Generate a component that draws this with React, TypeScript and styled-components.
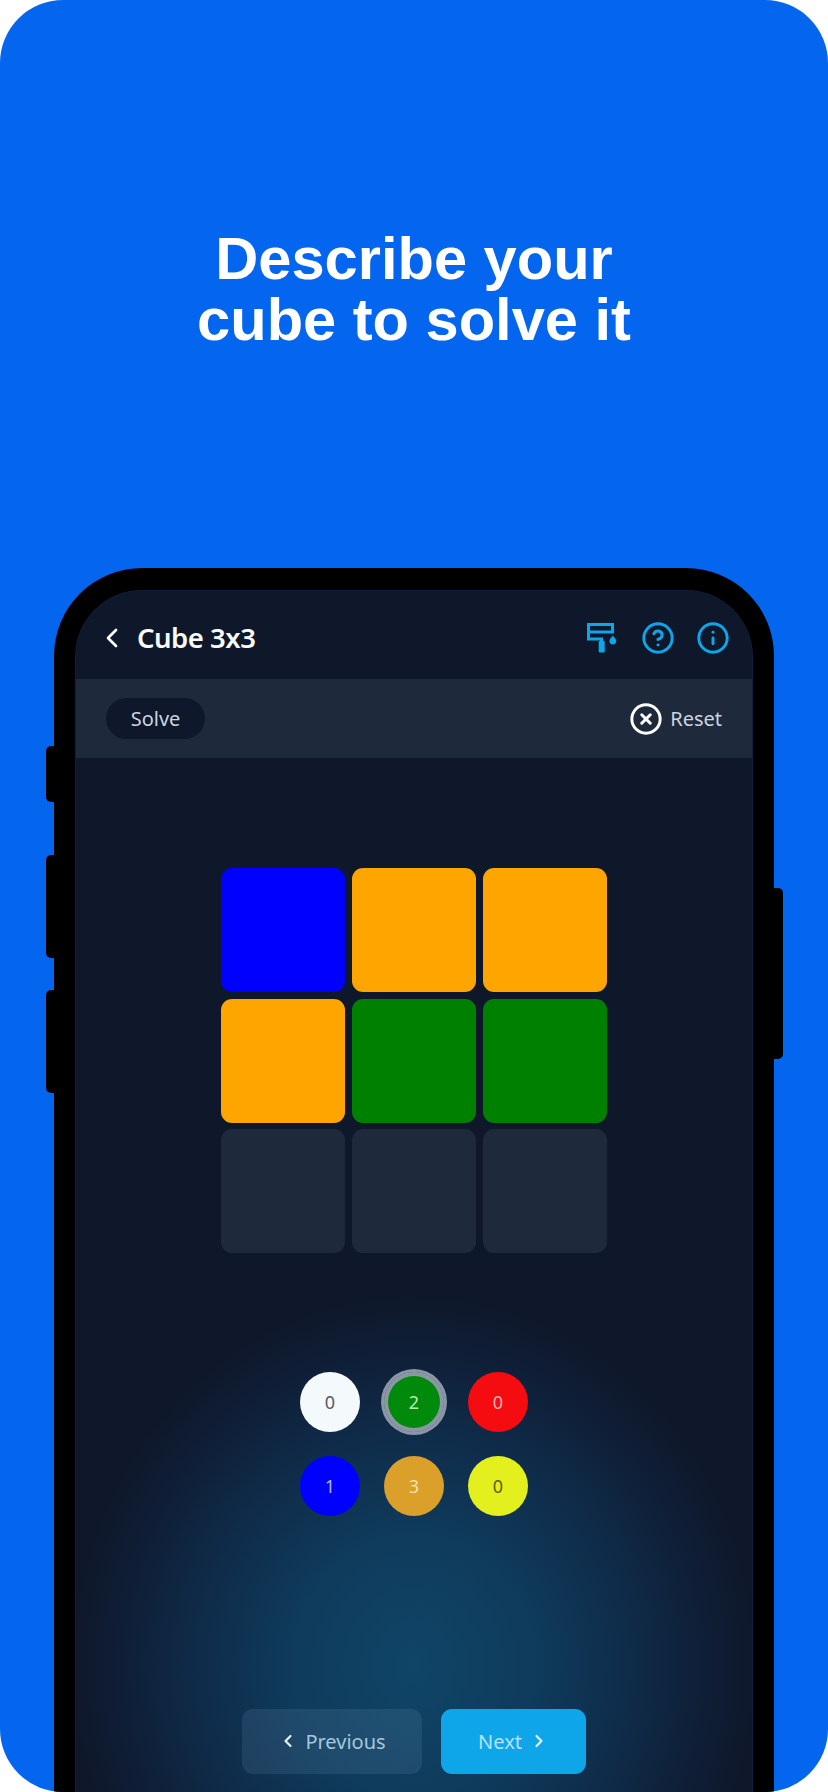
import React from "react";
import styled, { createGlobalStyle } from "styled-components";
import { ChevronLeft, ChevronRight, CircleHelp, Info, CircleX } from "lucide-react";

const Global = createGlobalStyle`
  html, body { margin: 0; padding: 0; background: #fff; }
`;

const Page = styled.div`
  width: 828px;
  height: 1792px;
  overflow: hidden;
  background: #0466ee;
  border-radius: 63px;
  padding-top: 228px;
  box-sizing: border-box;
`;

const Headline = styled.h1`
  margin: 0;
  font-family: "Liberation Sans", Arial, sans-serif;
  font-weight: 700;
  font-size: 59.6px;
  line-height: 61px;
  text-align: center;
  color: #fff;
`;

const Phone = styled.div`
  position: relative;
  width: 720px;
  height: 1400px;
  margin: 218px 0 0 54px;
  box-sizing: border-box;
  border: 21px solid #000;
  border-top-width: 22px;
  border-radius: 88px;
  background: #000;
`;

const SideKey = styled.span<{ $side: "left" | "right"; $top: number; $h: number }>`
  position: absolute;
  ${(p) => (p.$side === "left" ? "left: -29px;" : "right: -30px;")}
  top: ${(p) => p.$top - 590}px;
  height: ${(p) => p.$h}px;
  width: 12px;
  background: #000;
  border-radius: ${(p) => (p.$side === "left" ? "5px 0 0 5px" : "0 5px 5px 0")};
`;

const Screen = styled.div`
  display: flex;
  flex-direction: column;
  height: 100%;
  box-sizing: border-box;
  overflow: hidden;
  border: 1px solid #111f3c;
  border-bottom: none;
  border-radius: 67px 67px 0 0;
  background: radial-gradient(ellipse 345px 375px at 338px 1075px, #0f4567 0%, #0f3b5c 35%, #0f2c4a 62%, #0f1e36 85%, #0f172a 100%), #0f172a;
  font-family: "Noto Sans", sans-serif;
`;

const Header = styled.header`
  flex: none;
  height: 88px;
  display: flex;
  align-items: center;
  padding: 5px 22.5px 0 20px;
  box-sizing: border-box;
  background: #0f172a;
  color: #fff;
`;

const Title = styled.div`
  margin-left: 9px;
  font-size: 27.5px;
  font-weight: 600;
  letter-spacing: -0.5px;
  color: #f8fafc;
  flex: 1;
`;

const HeaderIcons = styled.div`
  display: flex;
  align-items: center;
  gap: 21px;
  color: #0ea5e9;
`;

const Toolbar = styled.div`
  flex: none;
  height: 79px;
  display: flex;
  align-items: center;
  justify-content: space-between;
  padding: 0 30px;
  box-sizing: border-box;
  background: #1e293b;
`;

const SolveButton = styled.button`
  width: 99px;
  height: 41px;
  border: none;
  border-radius: 21px;
  background: #0f172a;
  color: #cbd5e1;
  font: 400 20px "Noto Sans", sans-serif;
  padding: 0;
`;

const ResetButton = styled.div`
  display: flex;
  align-items: center;
  gap: 7.5px;
  color: #cbd5e1;
  font-size: 20px;
  & svg { color: #fff; }
`;

const Board = styled.div`
  align-self: center;
  margin-top: 110px;
  display: grid;
  grid-template-columns: repeat(3, 124px);
  grid-auto-rows: 124px;
  gap: 6.6px 7px;
`;

const Cell = styled.div<{ $c: string }>`
  background: ${(p) => p.$c};
  border-radius: 11px;
`;

const Palette = styled.div`
  align-self: center;
  margin-top: 118.5px;
  display: grid;
  grid-template-columns: repeat(3, 60px);
  grid-auto-rows: 60px;
  gap: 24px;
`;

const Swatch = styled.div<{ $bg: string; $fg: string; $selected?: boolean }>`
  display: flex;
  align-items: center;
  justify-content: center;
  border-radius: 50%;
  background: ${(p) => p.$bg};
  color: ${(p) => p.$fg};
  font-size: 18px;
  ${(p) => (p.$selected ? "box-shadow: 0 0 0 3px #8d96a8, inset 0 0 0 4px #8d96a8;" : "")}
`;

const Nav = styled.div`
  align-self: center;
  margin-top: 193px;
  display: flex;
  gap: 19px;
`;

const NavButton = styled.button<{ $primary?: boolean }>`
  height: 65px;
  width: ${(p) => (p.$primary ? "145px" : "180px")};
  display: flex;
  align-items: center;
  justify-content: center;
  gap: 7px;
  border: none;
  border-radius: 11px;
  padding: 0;
  background: ${(p) => (p.$primary ? "#0ea5e9" : "rgba(148, 190, 220, 0.12)")};
  color: ${(p) => (p.$primary ? "#b6e3f8" : "#a3c8dd")};
  font: 400 20px "Noto Sans", sans-serif;
  & svg { color: #e2f2fb; }
`;

const RollerSvg = styled.svg`
  margin-right: 2.5px;
`;

const RollerIcon = () => (
  <RollerSvg width="30" height="30" viewBox="0 0 30 30" fill="none">
    <rect x="1.5" y="1.5" width="24" height="7.5" stroke="currentColor" strokeWidth="3" />
    <path d="M1.5 9v7H14.5V20" stroke="currentColor" strokeWidth="3" />
    <rect x="11.7" y="18" width="6" height="11.5" rx="1" fill="currentColor" />
    <path d="M25.8 12.5c-.9 1.6-3.4 3.2-3.4 5.6a3.4 3.4 0 0 0 6.8 0c0-2.4-2.5-4-3.4-5.6z" fill="currentColor" />
  </RollerSvg>
);

const cells = ["#0000ff", "#ffa500", "#ffa500", "#ffa500", "#008000", "#008000", "#1e293b", "#1e293b", "#1e293b"];

const swatches = [
  { bg: "#f4f9fc", fg: "#555b60", n: 0 },
  { bg: "#008a0c", fg: "#b5f0b5", n: 2, selected: true },
  { bg: "#f40c10", fg: "#fbb4b4", n: 0 },
  { bg: "#0000ff", fg: "#b4b4ff", n: 1 },
  { bg: "#daa02a", fg: "#f6e1b0", n: 3 },
  { bg: "#e3f01e", fg: "#5a5f08", n: 0 },
];

export default function App() {
  return (
    <>
      <Global />
      <Page>
        <Headline>
          Describe your
          <br />
          cube to solve it
        </Headline>
        <Phone>
          <SideKey $side="left" $top={746} $h={56} />
          <SideKey $side="left" $top={855} $h={103} />
          <SideKey $side="left" $top={990} $h={103} />
          <SideKey $side="right" $top={888} $h={171} />
          <Screen>
            <Header>
              <ChevronLeft size={32} strokeWidth={2} />
              <Title>Cube 3x3</Title>
              <HeaderIcons>
                <RollerIcon />
                <CircleHelp size={34} strokeWidth={2.1} />
                <Info size={34} strokeWidth={2.1} />
              </HeaderIcons>
            </Header>
            <Toolbar>
              <SolveButton>Solve</SolveButton>
              <ResetButton>
                <CircleX size={34} strokeWidth={2.1} />
                Reset
              </ResetButton>
            </Toolbar>
            <Board>
              {cells.map((c, i) => (
                <Cell key={i} $c={c} />
              ))}
            </Board>
            <Palette>
              {swatches.map((s, i) => (
                <Swatch key={i} $bg={s.bg} $fg={s.fg} $selected={s.selected}>
                  {s.n}
                </Swatch>
              ))}
            </Palette>
            <Nav>
              <NavButton>
                <ChevronLeft size={20} strokeWidth={2.6} />
                Previous
              </NavButton>
              <NavButton $primary>
                Next
                <ChevronRight size={20} strokeWidth={2.6} />
              </NavButton>
            </Nav>
          </Screen>
        </Phone>
      </Page>
    </>
  );
}
